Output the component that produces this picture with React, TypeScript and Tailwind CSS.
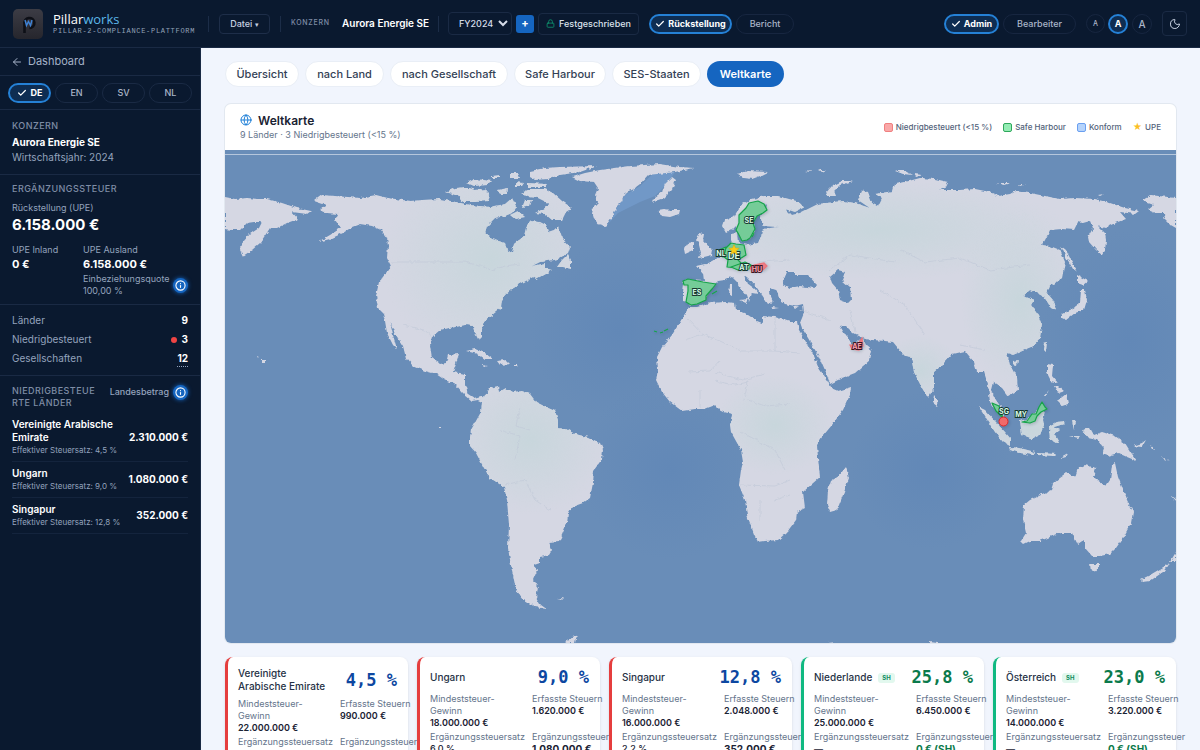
import { ArrowLeft, Check, Globe, Info, Lock, Moon } from 'lucide-react';

const languages = ['EN', 'SV', 'NL'];

const tabs = [
  { label: 'Übersicht', width: 'w-[74px]' },
  { label: 'nach Land', width: 'w-[79px]' },
  { label: 'nach Gesellschaft', width: 'w-[118px]' },
  { label: 'Safe Harbour', width: 'w-[92px]' },
  { label: 'SES-Staaten', width: 'w-[89px]' },
  { label: 'Weltkarte', width: 'w-[77px]', active: true },
];

const lowTaxed = [
  { name: 'Vereinigte Arabische Emirate', rate: '4,5 %', amount: '2.310.000 €' },
  { name: 'Ungarn', rate: '9,0 %', amount: '1.080.000 €' },
  { name: 'Singapur', rate: '12,8 %', amount: '352.000 €' },
];

const countries = [
  { name: 'Vereinigte Arabische Emirate', etr: '4,5 %', profit: '22.000.000 €', taxes: '990.000 €', rate: '10,5 %', topUp: '2.310.000 €', sh: false },
  { name: 'Ungarn', etr: '9,0 %', profit: '18.000.000 €', taxes: '1.620.000 €', rate: '6,0 %', topUp: '1.080.000 €', sh: false },
  { name: 'Singapur', etr: '12,8 %', profit: '16.000.000 €', taxes: '2.048.000 €', rate: '2,2 %', topUp: '352.000 €', sh: false },
  { name: 'Niederlande', etr: '25,8 %', profit: '25.000.000 €', taxes: '6.450.000 €', rate: '—', topUp: '0 € (SH)', sh: true },
  { name: 'Österreich', etr: '23,0 %', profit: '14.000.000 €', taxes: '3.220.000 €', rate: '—', topUp: '0 € (SH)', sh: true },
];

// Coastlines, in the map's own coordinate space (viewBox 225 150 951 493)
const land = [
  // Far east of Russia, wrapped round to the left edge
  'M225 197L235 199 247 198 258 199 267 199 282 203 297 208 311 211 307 214 292 212 298 219 287 223 277 228 270 228 266 234 260 243 252 250 243 256 240 250 243 242 250 234 259 228 262 222 254 222 247 223 240 230 232 230 225 229Z',
  // North America
  'M314 201L322 195 335 196 348 197 360 198 376 195 388 198 410 201 422 200 440 199 456 202 470 205 490 207 505 204 512 198 516 206 512 213 505 216 495 218 487 226 485 233 492 239 505 243 507 250 512 253 514 244 524 236 526 228 530 221 540 222 546 225 548 232 554 230 558 226 562 238 570 247 568 253 558 259 548 261 540 262 532 266 545 263 545 268 552 270 545 274 536 279 533 277 522 283 512 289 505 295 502 300 501 308 492 315 484 321 482 328 482 338 479 341 475 333 473 326 465 325 456 327 448 328 440 330 433 336 430 345 432 358 440 364 446 363 448 355 459 354 456 363 453 372 465 374 465 385 468 394 474 398 481 396 486 400 484 403 478 400 472 401 463 393 456 385 445 380 436 374 425 371 413 366 406 358 403 346 394 332 390 322 393 335 397 349 393 345 387 333 385 321 383 313 378 308 376 296 379 282 386 273 391 266 387 258 388 245 387 238 381 230 372 226 360 224 352 227 343 233 330 239 318 242 330 235 341 228 335 220 338 214 327 213 320 210 326 205Z',
  // South America
  'M482 402L486 394 490 388 498 386 499 392 506 388 512 392 522 391 530 394 536 402 546 407 555 411 558 420 558 428 566 429 575 434 588 437 600 443 603 450 602 459 594 470 593 483 590 498 583 503 572 507 568 514 567 523 562 535 559 541 549 542 552 550 549 555 540 557 540 563 534 565 537 571 533 580 538 588 536 597 540 604 547 609 535 607 524 600 516 590 513 575 510 560 508 548 509 525 507 500 504 487 490 478 484 468 476 453 470 446 470 438 471 430 476 421 481 412Z',
  // Greenland, Iceland, Svalbard
  'M572 177L585 173 600 170 630 166 660 164 680 167 694 168 675 172 648 175 640 184 632 190 625 193 622 201 617 206 613 215 610 220 605 226 598 224 592 215 593 208 598 203 595 195 598 188 594 182 580 181Z',
  'M658 210L664 209 672 210 680 210 679 214 670 217 662 216 660 213Z',
  'M737 174L748 171 768 172 760 176 752 179 744 178Z',
  'M672 177L676 180 672 190 664 198 652 202 655 197 662 192 665 184Z',
  // Canadian archipelago
  'M530 171L545 168 560 167 597 166 580 172 560 175 548 179 535 180 530 177Z',
  'M446 192L455 188 465 187 475 190 485 189 490 196 488 201 475 202 462 202 458 196 452 194Z',
  'M521 193L530 189 545 189 553 193 562 201 572 208 566 212 562 220 552 220 545 214 535 213 545 208 548 203 538 198 528 197Z',
  'M467 183L475 179 492 181 488 185 474 186ZM498 190L508 188 507 194 500 194ZM510 173L518 173 520 178 510 178ZM528 183L548 184 546 187 528 187ZM510 215L518 211 525 217 515 219ZM525 200L532 200 530 206 522 208ZM515 182L524 183 522 186 515 186ZM492 176L500 175 500 178 492 178Z',
  // Newfoundland and the Caribbean
  'M557 267L562 260 568 254 571 260 571 269 563 267Z',
  'M466 351L475 349 485 353 493 359 485 359 478 354ZM497 361L506 360 510 364 500 365ZM482 365L488 366 484 367ZM513 365L518 365 517 367 513 367Z',
  // Hawaii
  'M262 360L265 360 265 363 262 363ZM257 356L260 357 258 358Z',
  // Eurasia
  'M682 281L690 280 704 281 703 273 697 266 706 264 713 261 719 257 724 252 728 246 733 245 731 240 731 234 737 233 738 243 748 245 758 243 761 236 762 231 770 228 779 227 763 226 760 216 765 210 766 204 757 213 754 222 755 231 750 238 742 241 738 232 736 226 733 229 726 233 722 226 724 220 735 215 741 205 752 199 765 196 778 196 800 202 803 208 795 212 786 209 792 215 800 213 812 207 818 204 826 203 843 201 855 203 870 208 858 200 862 190 868 192 872 203 878 206 882 198 875 194 893 191 895 184 905 182 920 178 935 179 948 182 945 188 940 190 960 190 975 189 990 192 998 196 1010 194 1015 191 1030 193 1045 196 1060 199 1075 198 1095 199 1110 203 1125 208 1139 211 1135 214 1120 212 1126 219 1115 223 1105 228 1098 226 1105 233 1106 240 1105 250 1102 255 1096 250 1089 242 1088 237 1093 228 1090 221 1083 223 1078 222 1074 230 1062 229 1050 230 1045 240 1042 245 1050 246 1060 250 1065 262 1062 278 1057 282 1050 285 1047 293 1053 300 1057 308 1052 310 1048 303 1044 297 1037 293 1030 290 1023 296 1034 300 1031 305 1038 315 1042 325 1040 338 1032 347 1020 352 1013 355 1007 353 1010 365 1017 378 1018 390 1008 396 1002 388 993 382 991 390 996 400 1003 410 1004 418 997 412 990 402 988 385 984 372 977 372 974 362 965 351 952 354 942 365 934 372 934 388 928 398 922 388 914 372 911 357 905 356 903 354 893 342 885 341 873 340 865 339 853 333 845 325 840 326 846 336 850 341 853 346 859 340 863 338 866 345 872 350 870 360 855 373 842 378 830 384 828 378 818 355 808 338 802 328 800 322 804 312 803 304 795 306 785 304 780 300 779 293 776 290 770 288 769 293 773 302 768 304 762 295 757 288 748 278 744 275 747 283 755 289 758 293 752 292 749 302 747 296 742 290 737 282 732 277 725 280 718 281 714 285 710 290 706 298 698 303 690 305 688 302 683 301 683 292 684 284Z',
  'M785 290L800 289 812 288 812 292 790 296Z',
  // British Isles
  'M700 233L704 234 703 240 709 247 713 250 712 255 704 257 697 258 701 253 699 245 696 240ZM688 243L694 242 694 250 685 254 684 249Z',
  'M730 284L732 284 732 296 729 295ZM739 300L748 299 746 303ZM771 307L779 308 772 309ZM793 307L799 306 795 309Z',
  'M825 194L832 186 842 181 853 181 840 185 834 191 836 196 828 196ZM895 171L905 171 912 175 903 174ZM914 174L923 175 916 177ZM996 183L1010 183 1004 185ZM1018 184L1026 184 1020 186ZM1098 195L1104 194 1100 196ZM805 171L812 170 810 172ZM818 170L826 170 822 172Z',
  // Africa and Madagascar
  'M689 307L697 307 710 303 725 302 735 303 736 310 745 313 757 321 762 323 762 316 775 317 790 322 797 322 799 330 806 342 814 356 819 368 828 382 831 388 838 391 851 387 850 395 843 410 832 425 822 437 817 445 818 458 820 477 812 484 803 492 805 508 797 512 796 520 787 532 778 540 765 541 758 542 754 534 747 515 745 500 739 485 741 470 743 462 741 450 731 432 730 425 732 414 724 412 720 410 715 405 705 409 695 409 682 411 670 402 662 392 656 380 658 370 657 357 662 347 672 335 680 322 686 312Z',
  'M846 467L849 478 843 495 837 510 830 512 827 505 828 490 831 481 839 476Z',
  // East and south-east Asia
  'M1062 314L1072 309 1080 303 1081 290 1085 290 1087 300 1084 310 1075 313 1066 320 1062 318ZM1077 275L1088 281 1083 285 1077 283ZM1061 246L1066 250 1072 262 1078 272 1073 269 1066 257ZM1044 343L1047 342 1046 352 1043 349ZM1013 361L1018 360 1017 365 1013 364ZM934 395L939 402 937 406 933 403Z',
  'M1047 364L1053 365 1052 376 1058 383 1051 381 1047 373ZM1057 401L1066 394 1068 404 1062 406ZM1054 386L1058 386 1064 391 1058 393ZM1043 397L1049 390 1045 397Z',
  'M1020 421L1030 418 1040 408 1045 410 1043 420 1044 425 1040 435 1032 439 1022 435ZM979 407L985 410 995 421 1005 432 1010 438 1010 446 1003 442 995 432 987 420ZM1009 447L1020 448 1035 452 1033 455 1020 453 1010 450ZM1038 453L1056 454 1054 456 1038 455ZM1059 459L1068 454 1066 457ZM1049 426L1056 422 1066 421 1064 424 1054 427 1060 430 1055 434 1059 441 1055 443 1050 440ZM1072 420L1076 421 1074 430ZM1069 436L1080 436 1078 438Z',
  'M1082 430L1090 428 1094 435 1102 432 1115 436 1125 443 1130 451 1137 461 1127 457 1118 453 1108 456 1102 454 1104 448 1097 440 1088 438ZM1133 446L1142 443 1146 440 1142 447ZM1150 446L1156 450 1152 449ZM1162 457L1170 461 1164 459Z',
  // Australia and New Zealand
  'M1021 541L1026 533 1023 520 1024 505 1030 500 1040 495 1051 490 1053 484 1060 478 1067 473 1075 477 1078 468 1085 465 1096 468 1093 477 1100 482 1106 486 1110 480 1112 465 1115 463 1118 477 1122 487 1127 500 1133 512 1131 523 1123 538 1116 548 1110 554 1100 556 1092 556 1085 548 1085 540 1078 545 1072 533 1060 533 1050 537 1040 541 1030 541 1024 544Z',
  'M1090 564L1100 564 1096 571 1091 572ZM1140 580L1150 575 1165 566 1169 563 1163 572 1150 581 1142 582ZM1170 562L1176 552 1176 562ZM1170 495L1176 500 1176 502Z',
  // Alaska again at the right edge
  'M1142 201L1150 195 1176 198 1176 228 1169 224 1163 218 1166 213 1155 213 1148 210 1154 205Z',
  'M564 643L572 637 580 635 576 639 575 643ZM557 599L564 598 562 600ZM930 641L945 643 930 643ZM828 642L836 642 836 643ZM439 427L441 427 441 429 439 429Z',
];

const seas = [
  'M782 284L787 272 793 272 795 275 800 275 808 275 816 284 815 288 800 286 790 288Z',
  'M830 277L838 270 845 272 842 280 850 287 851 300 848 303 840 300 838 290 832 283Z',
];

const borders =
  'M391 262L465 262 480 266 492 270 505 266 520 264M403 325L425 330 432 338M686 340L702 334 720 341 741 351 775 351M687 318L702 334M775 318L775 351 800 353M688 372L710 371 720 360M715 372L742 380 765 374M700 390L700 408M715 381L735 385 748 382 744 400M748 400L765 406 790 404M741 432L775 450 785 470M740 485L775 486 790 480M760 500L760 520M775 500L790 495M500 430L520 436 515 460M505 485L525 480 535 500 550 510M520 408L516 426 530 430M900 250L925 262 960 258 990 270 1030 265M830 270L850 255 895 262M880 290L905 305 925 335M960 345L985 350M760 262L790 260M800 310L830 320M850 310L855 332';

const safeHarbour = [
  'M683 281L688 279 703 282 716 284 712 289 706 296 706 300 697 304 691 305 686 302 688 291 688 285 684 285Z',
  'M746 208L749 203 758 201 764 204 767 210 763 213 757 216 753 223 755 229 750 238 747 240 742 241 738 233 736 230 739 223 739 215Z',
  'M731 243L736 244 744 245 746 255 738 260 743 265 738 268 727 267 728 260 723 256 725 249Z',
  'M719 250L726 247 725 252 723 257 719 254Z',
  'M731 267L745 262 751 265 749 269 738 270Z',
  'M992 403L999 406 1003 418 996 411Z',
  'M1022 422L1027 421 1032 414 1036 414 1039 407 1042 402 1045 407 1047 409 1041 412 1037 416 1035 421 1030 423Z',
  'M654 331L657 332M660 333L663 332M664 331L668 329M712 294L717 291M752 237L754 233',
];

const lowTaxShapes = [
  'M750 268L754 265 764 263 767 266 763 270 753 271Z',
  'M850 345L857 345 862 338 863 346 859 350 852 349Z',
];

const mapLabels = [
  { code: 'SE', x: 749, y: 223, size: 7 },
  { code: 'NL', x: 721, y: 256, size: 7 },
  { code: 'DE', x: 734, y: 259, size: 9 },
  { code: 'AT', x: 744, y: 270, size: 7 },
  { code: 'HU', x: 757, y: 272, size: 7, low: true },
  { code: 'ES', x: 697, y: 295, size: 7 },
  { code: 'AE', x: 857, y: 349, size: 7, low: true },
  { code: 'SG', x: 1004, y: 414, size: 7 },
  { code: 'MY', x: 1021, y: 417, size: 7 },
];

function WorldMap() {
  return (
    <svg viewBox="225 150 951 493" className="block w-full bg-[#698db8]" role="img" aria-label="Weltkarte">
      <defs>
        <filter id="coast" x="0" y="0" width="100%" height="100%">
          <feTurbulence type="fractalNoise" baseFrequency="0.22" numOctaves="2" seed="4" />
          <feDisplacementMap in="SourceGraphic" scale="4" xChannelSelector="R" yChannelSelector="G" />
        </filter>
        <filter id="raised" x="-10%" y="-10%" width="120%" height="120%">
          <feDropShadow dx="1" dy="1" stdDeviation="1.5" floodColor="#1e293b" floodOpacity="0.25" />
        </filter>
        <radialGradient id="deep">
          <stop offset="0" stopColor="#6288b7" />
          <stop offset="1" stopColor="#6288b7" stopOpacity="0" />
        </radialGradient>
        <radialGradient id="forest">
          <stop offset="0" stopColor="#c8d6dc" />
          <stop offset="1" stopColor="#c8d6dc" stopOpacity="0" />
        </radialGradient>
        <clipPath id="land">
          {land.map((d) => (
            <path key={d} d={d} />
          ))}
        </clipPath>
      </defs>

      <ellipse cx="620" cy="330" rx="90" ry="90" fill="url(#deep)" />
      <ellipse cx="670" cy="470" rx="90" ry="90" fill="url(#deep)" />
      <ellipse cx="1130" cy="340" rx="90" ry="110" fill="url(#deep)" />
      <ellipse cx="930" cy="470" rx="80" ry="80" fill="url(#deep)" />
      <path d="M675 172L655 172 640 186 625 195 615 210 608 224 618 213 640 202 655 196 667 184Z" fill="#7198c7" />

      <g filter="url(#coast)">
        <g clipPath="url(#land)">
          <rect x="225" y="150" width="951" height="493" fill="#d5d7e3" />
          <ellipse cx="490" cy="260" rx="110" ry="100" fill="url(#forest)" />
          <ellipse cx="530" cy="440" rx="80" ry="75" fill="url(#forest)" />
          <ellipse cx="775" cy="425" rx="60" ry="50" fill="url(#forest)" />
          <ellipse cx="880" cy="230" rx="190" ry="50" fill="url(#forest)" />
          <ellipse cx="1020" cy="300" rx="60" ry="90" fill="url(#forest)" />
          <ellipse cx="1030" cy="430" rx="70" ry="40" fill="url(#forest)" />
          <ellipse cx="920" cy="370" rx="40" ry="35" fill="url(#forest)" />
        </g>
        {seas.map((d) => (
          <path key={d} d={d} fill="#698db8" />
        ))}
        <path d={borders} fill="none" stroke="#c0c8d7" strokeWidth="0.6" />
      </g>

      <g filter="url(#raised)">
        <g fill="#74cc98" stroke="#16a34a" strokeWidth="1.2" strokeLinejoin="round">
          {safeHarbour.map((d) => (
            <path key={d} d={d} />
          ))}
        </g>
        <g fill="#ee7c84" stroke="#e8747c" strokeWidth="1.2">
          {lowTaxShapes.map((d) => (
            <path key={d} d={d} />
          ))}
        </g>
        <circle cx="1003.5" cy="421.5" r="4.5" fill="#f06a6a" stroke="#dc2626" />
      </g>
      {mapLabels.map((l) => (
        <text
          key={l.code}
          x={l.x}
          y={l.y}
          fontSize={l.size}
          textAnchor="middle"
          fontWeight="700"
          fill={l.low ? '#fda4af' : '#d9fbe6'}
          stroke={l.low ? '#3b1524' : '#16382f'}
          strokeWidth="1.8"
          paintOrder="stroke"
        >
          {l.code}
        </text>
      ))}
      <path d="M734 244.500l1.500 3.400 3.700.4-2.800 2.400.8 3.700-3.200-1.900-3.200 1.900.8-3.700-2.800-2.400 3.700-.4z" fill="#facc15" stroke="#d99a06" strokeWidth="0.4" />
      <path d="M225 154.500H1176" stroke="#b5c6dc" />
    </svg>
  );
}

function InfoButton() {
  return (
    <button aria-label="Info" className="flex h-[15px] w-[15px] shrink-0 items-center justify-center rounded-full bg-[#1565c0] text-white shadow-[0_0_4px_#1565c0]">
      <Info size={11} strokeWidth={2.4} />
    </button>
  );
}

function Divider() {
  return <div className="h-4 w-px bg-[#1c2d48]" />;
}

function Header() {
  return (
    <header className="flex h-12 shrink-0 items-center border-b border-[#1a2a44] bg-[#0a192f] pl-[13px] pr-[13px] text-[9px] font-medium text-[#c6d0e0]">
      <svg viewBox="0 0 30 30" className="h-[30px] w-[30px] shrink-0" aria-hidden="true">
        <defs>
          <linearGradient id="tile" x1="0" y1="0" x2="0" y2="1">
            <stop offset="0" stopColor="#3c3c45" />
            <stop offset="1" stopColor="#26262d" />
          </linearGradient>
        </defs>
        <rect width="30" height="30" rx="5" fill="url(#tile)" />
        <path d="M11.500 24v-9a5 5 0 1 1 5 4" fill="none" stroke="#0d0f16" strokeWidth="2.600" />
        <path d="M12 11l1.500 5.500 2-4 2 4 1.500-5.500" fill="none" stroke="#3f84d8" strokeWidth="1.400" />
      </svg>
      <div className="ml-[10px] w-[146px]">
        <p className="font-['Open_Sans',sans-serif] text-[13px] font-normal leading-[15px] text-white">
          Pillar<span className="text-[#5cb8ea]">works</span>
        </p>
        <p className="whitespace-nowrap font-['Liberation_Mono',monospace] text-[7px] leading-[8px] tracking-widest text-[#94a3b8]">
          PILLAR-2-COMPLIANCE-PLATTFORM
        </p>
      </div>
      <div className="ml-[9px]">
        <Divider />
      </div>
      <button className="mx-[10px] h-5 w-[51px] rounded border border-[#1e2e49]">
        Datei <span className="text-[7px]">▾</span>
      </button>
      <Divider />
      <span className="ml-[10px] w-[41px] text-[7px] tracking-widest text-[#7f8da6]">KONZERN</span>
      <span className="ml-[10px] mr-[10px] w-[86px] whitespace-nowrap text-[10px] font-semibold text-white">Aurora Energie SE</span>
      <Divider />
      <select aria-label="Wirtschaftsjahr" className="ml-[9px] h-[23px] w-[64px] rounded border border-[#1a2a44] bg-[#0a192f] pl-[6px] text-[9px] text-[#d5dce8]">
        <option>FY2024</option>
      </select>
      <button
        aria-label="Neues Wirtschaftsjahr"
        className="ml-1 flex h-[18px] w-[18px] items-center justify-center rounded-[3px] bg-[#1565c0] text-[11px] font-bold leading-none text-white"
      >
        +
      </button>
      <button className="ml-1 flex h-[22px] w-[101px] items-center justify-center gap-1 rounded border border-[#1a2a44] text-[#dbe2ec]">
        <Lock size={9} className="text-[#0f9f74]" /> Festgeschrieben
      </button>
      <button className="ml-[10px] flex h-5 w-[83px] items-center justify-center gap-[3px] rounded-full border-2 border-[#2581d6] bg-[#0e2d52] font-bold text-white">
        <Check size={10} strokeWidth={3} /> Rückstellung
      </button>
      <button className="ml-1 h-5 w-[58px] rounded-full border border-[#172640] text-[#aab6c9]">Bericht</button>
      <div className="ml-auto flex items-center">
        <button className="flex h-5 w-[55px] items-center justify-center gap-[3px] rounded-full border-2 border-[#2581d6] bg-[#0e2d52] font-bold text-white">
          <Check size={10} strokeWidth={3} /> Admin
        </button>
        <button className="ml-1 h-5 w-[73px] rounded-full border border-[#172640] text-[#aab6c9]">Bearbeiter</button>
        <button className="ml-[10px] h-[19px] w-[19px] rounded-full border border-[#172640] text-[7px] leading-4 text-[#aab6c9]">A</button>
        <button className="ml-[3px] h-5 w-5 rounded-full border-2 border-[#2581d6] bg-[#0e2d52] font-bold leading-4 text-white">A</button>
        <button className="ml-1 h-5 w-5 rounded-full border border-[#172640] text-[10px] leading-4 text-[#aab6c9]">A</button>
        <button aria-label="Dunkelmodus" className="ml-[10px] flex h-[25px] w-[25px] items-center justify-center rounded border border-[#1a2a44] text-[#c6d0e0]">
          <Moon size={12} />
        </button>
      </div>
    </header>
  );
}

function Sidebar() {
  return (
    <aside className="w-[201px] shrink-0 border-r border-[#1a2a44] bg-[#0a192f] text-[9px] text-[#94a3bd]">
      <a href="#dashboard" className="flex h-7 items-center gap-[5px] border-b border-[#1a2a44] px-[11px] text-[11px] text-[#a5b2c8]">
        <ArrowLeft size={12} /> Dashboard
      </a>
      <div className="flex h-[34px] items-center gap-1 border-b border-[#1a2a44] px-2 text-[9px] font-medium">
        <button className="flex h-5 w-[43px] items-center justify-center gap-1 rounded-full border-2 border-[#2581d6] bg-[#0e2d52] font-bold text-white">
          <Check size={10} strokeWidth={3} /> DE
        </button>
        {languages.map((l) => (
          <button key={l} className="h-5 w-[43px] rounded-full border border-[#1a2a44] text-[#aab6c9]">
            {l}
          </button>
        ))}
      </div>

      <section className="border-b border-[#1a2a44] px-3 pb-[9px] pt-[10px]">
        <h2 className="text-[9px] font-medium leading-3 tracking-wider text-[#7f8da6]">KONZERN</h2>
        <p className="mt-[2px] text-[10px] font-bold leading-4 text-white">Aurora Energie SE</p>
        <p className="text-[10px] leading-[15px]">Wirtschaftsjahr: 2024</p>
      </section>

      <section className="border-b border-[#1a2a44] px-3 pb-[7px] pt-2">
        <h2 className="text-[9px] font-medium leading-3 tracking-wider text-[#7f8da6]">ERGÄNZUNGSSTEUER</h2>
        <p className="mt-[6px] text-[9px] leading-[14px]">Rückstellung (UPE)</p>
        <p className="text-[15px] font-bold leading-5 text-white">6.158.000 €</p>
        <div className="mt-2 flex">
          <div className="w-[72px]">
            <p className="leading-[14px]">UPE Inland</p>
            <p className="text-[11px] font-bold leading-[14px] text-white">0 €</p>
          </div>
          <div>
            <p className="leading-[14px]">UPE Ausland</p>
            <p className="text-[11px] font-bold leading-[14px] text-white">6.158.000 €</p>
            <div className="mt-[2px] flex items-center gap-1">
              <p className="w-[86px] leading-[12px]">Einbeziehungsquote 100,00 %</p>
              <InfoButton />
            </div>
          </div>
        </div>
      </section>

      <section className="border-b border-[#1a2a44] px-3 pb-[7px] pt-[6px] text-[10px] leading-[19px]">
        <div className="flex justify-between">
          <span>Länder</span>
          <span className="font-bold text-white">9</span>
        </div>
        <div className="flex items-center">
          <span>Niedrigbesteuert</span>
          <span className="ml-auto mr-[5px] h-[6px] w-[6px] rounded-full bg-[#ef4444]" />
          <span className="font-bold text-white">3</span>
        </div>
        <div className="flex justify-between">
          <span>Gesellschaften</span>
          <a href="#gesellschaften" className="font-bold text-white underline decoration-[#94a3bd] decoration-dotted underline-offset-4">
            12
          </a>
        </div>
      </section>

      <section className="px-3 pt-[9px]">
        <div className="flex">
          <h2 className="w-[88px] break-all text-[9px] font-medium leading-[12px] tracking-wider text-[#7f8da6]">NIEDRIGBESTEUERTE LÄNDER</h2>
          <span className="ml-auto mr-1 text-[9px] font-medium leading-[14px]">Landesbetrag</span>
          <InfoButton />
        </div>
        <ul className="mt-1">
          {lowTaxed.map((c) => (
            <li key={c.name} className="flex items-center justify-between border-b border-[#14243d] py-[5px]">
              <div>
                <p className="max-w-[110px] text-[10px] font-semibold leading-[13px] text-white">{c.name}</p>
                <p className="whitespace-nowrap text-[8px] leading-3">Effektiver Steuersatz: {c.rate}</p>
              </div>
              <span className="whitespace-nowrap text-[10px] font-bold text-white">{c.amount}</span>
            </li>
          ))}
        </ul>
      </section>
    </aside>
  );
}

export default function App() {
  return (
    <div className="flex h-screen flex-col overflow-hidden font-[Inter,sans-serif]">
      <Header />
      <div className="flex min-h-0 flex-1">
        <Sidebar />
        <main className="min-w-0 flex-1 overflow-y-auto bg-[#f1f5fd] px-6 pt-[13px] [scrollbar-width:none]">
          <nav className="flex gap-[6px]">
            {tabs.map((t) => (
              <button
                key={t.label}
                className={`h-[26px] whitespace-nowrap rounded-full text-[11px] ${t.width} ${
                  t.active ? 'bg-[#1565c0] font-semibold text-white' : 'border border-[#e9eef6] bg-white font-medium text-[#334155]'
                }`}
              >
                {t.label}
              </button>
            ))}
          </nav>

          <section className="mt-[17px] overflow-hidden rounded-[6px] bg-white shadow-[0_0_0_1px_#e2e8f0]">
            <div className="flex h-[46px] items-center justify-between px-[15px]">
              <div>
                <h1 className="flex items-center gap-[6px] text-[12px] font-semibold leading-[15px] text-[#1a2233]">
                  <Globe size={12} className="text-[#1e7fd6]" /> Weltkarte
                </h1>
                <p className="text-[9px] leading-[14px] text-[#64748b]">9 Länder · 3 Niedrigbesteuert (&lt;15 %)</p>
              </div>
              <ul className="flex gap-[11px] text-[8px] font-medium text-[#52627a]">
                <li className="flex items-center gap-[3px]">
                  <span className="h-[9px] w-[9px] rounded-[2px] border border-[#f08080] bg-[#f9a8a8]" /> Niedrigbesteuert (&lt;15 %)
                </li>
                <li className="flex items-center gap-[3px]">
                  <span className="h-[9px] w-[9px] rounded-[2px] border border-[#2fa85c] bg-[#94ecb4]" /> Safe Harbour
                </li>
                <li className="flex items-center gap-[3px]">
                  <span className="h-[9px] w-[9px] rounded-[2px] border border-[#6a9ff0] bg-[#b5d3fb]" /> Konform
                </li>
                <li className="flex items-center gap-[3px]">
                  <span className="text-[9px] text-[#fbbf24]">★</span> UPE
                </li>
              </ul>
            </div>
            <WorldMap />
          </section>

          <div className="mt-[14px] grid grid-cols-5 gap-[9px]">
            {countries.map((c) => (
              <article
                key={c.name}
                className={`relative rounded-[8px] border-l-[3px] bg-white pb-3 pl-[10px] pr-[11px] pt-[10px] shadow-sm ${
                  c.sh ? 'border-[#10b981]' : 'border-[#e53e3e]'
                }`}
              >
                <div className="flex items-center justify-between">
                  <h2 className="flex max-w-[94px] items-center gap-[6px] text-[10px] font-medium leading-[13px] text-[#263246]">
                    {c.name}
                    {c.sh && <span className="rounded-[3px] bg-[#e2f8ee] px-1 text-[6px] font-bold leading-[10px] text-[#0c8a5c]">SH</span>}
                  </h2>
                  <span
                    className={`whitespace-nowrap font-['DejaVu_Sans_Mono',monospace] text-[17px] font-bold leading-[21px] ${
                      c.sh ? 'text-[#0b7a4b]' : 'text-[#0d47a1]'
                    }`}
                  >
                    {c.etr}
                  </span>
                </div>
                <dl className="mt-[5px] grid grid-cols-[92px_92px] gap-x-[10px] gap-y-[2px] text-[9px] leading-3 text-[#64748b]">
                  <div>
                    <dt>
                      Mindeststeuer-
                      <br />
                      Gewinn
                    </dt>
                    <dd className="font-semibold text-[#1a2233]">{c.profit}</dd>
                  </div>
                  <div className="whitespace-nowrap">
                    <dt>Erfasste Steuern</dt>
                    <dd className="font-semibold text-[#1a2233]">{c.taxes}</dd>
                  </div>
                  <div>
                    <dt>Ergänzungssteuersatz</dt>
                    <dd className="font-medium text-[#1a2233]">{c.rate}</dd>
                  </div>
                  <div className="whitespace-nowrap">
                    <dt>Ergänzungssteuer</dt>
                    <dd className={`text-[10px] font-bold ${c.sh ? 'text-[#0b7a4b]' : 'text-[#1a2233]'}`}>{c.topUp}</dd>
                  </div>
                </dl>
              </article>
            ))}
          </div>
        </main>
      </div>
    </div>
  );
}
